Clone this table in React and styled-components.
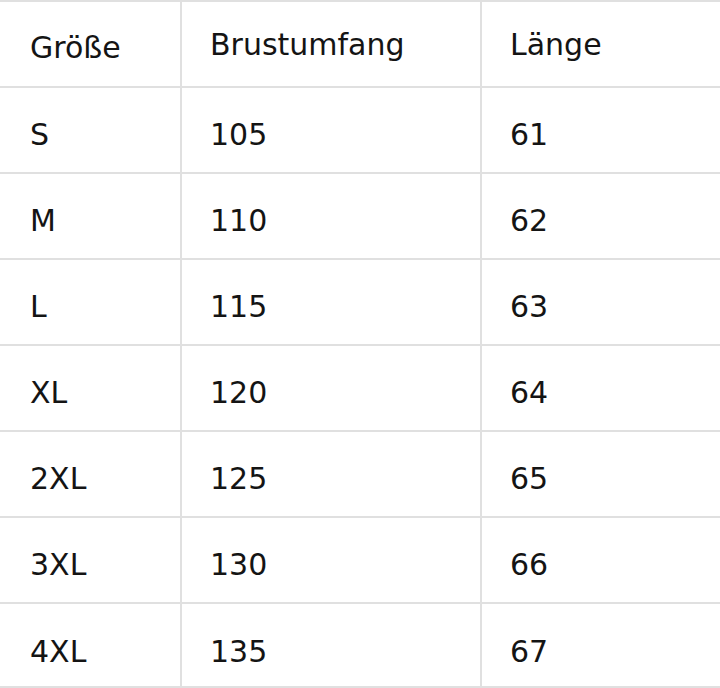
import React from 'react'
import styled, {createGlobalStyle} from 'styled-components'

const GlobalStyle = createGlobalStyle`
    html, body {
        margin: 0;
        padding: 0;
        background: #fff;
    }
    body {
        font-family: "DejaVu Sans", "Liberation Sans", sans-serif;
        color: #141414;
    }
`

const Table = styled.div`
    width: 720px;
    border-top: 2px solid #e0e0e0;
`

const Row = styled.div`
    display: grid;
    grid-template-columns: 180px 300px 1fr;
    height: ${props => props.last ? '82px' : '84px'};
    border-bottom: 2px solid #e0e0e0;
`

const Cell = styled.div`
    display: flex;
    align-items: center;
    padding: ${props => props.shift || 0}px 0 0 ${props => props.first ? '30px' : '28px'};
    border-left: ${props => props.first ? 'none' : '2px solid #e0e0e0'};
    font-size: 30px;
`

const rows = [
    ['S', '105', '61'],
    ['M', '110', '62'],
    ['L', '115', '63'],
    ['XL', '120', '64'],
    ['2XL', '125', '65'],
    ['3XL', '130', '66'],
    ['4XL', '135', '67'],
]

export default () => {
    return (
      <>
          <GlobalStyle />
          <Table>
              <Row>
                  <Cell first shift={6}>Größe</Cell>
                  <Cell>Brustumfang</Cell>
                  <Cell>Länge</Cell>
              </Row>
              {rows.map((r, i) => {
                  const last = i === rows.length - 1
                  const shift = last ? 13 : 9
                  return (
                    <Row key={r[0]} last={last}>
                        <Cell first shift={shift}>{r[0]}</Cell>
                        <Cell shift={shift}>{r[1]}</Cell>
                        <Cell shift={shift}>{r[2]}</Cell>
                    </Row>
                  )
              })}
          </Table>
      </>
    )
}
